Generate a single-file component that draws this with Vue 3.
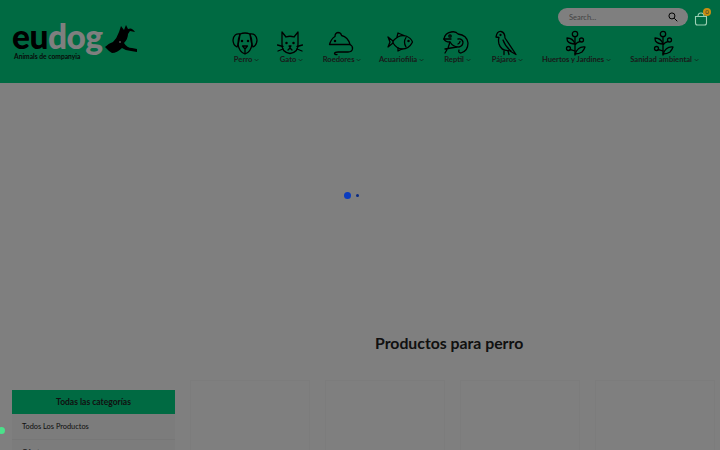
<script setup>
const navItems = [
  { label: "Perro", icon: "dog", width: 43 },
  { label: "Gato", icon: "cat", width: 47 },
  { label: "Roedores", icon: "mouse", width: 54 },
  { label: "Acuariofilia", icon: "fish", width: 65 },
  { label: "Reptil", icon: "reptile", width: 47 },
  { label: "Pájaros", icon: "bird", width: 53 },
  { label: "Huertos y Jardines", icon: "plant", width: 85 },
  { label: "Sanidad ambiental", icon: "plant", width: 91 },
];
</script>

<template>
  <div class="page">
    <header class="header">
      <div class="logo">
        <div class="logo-top">
          <span class="logo-text"><b>eu</b><span class="logo-dog">dog</span></span>
          <svg class="logo-pet" viewBox="0 0 34 32" width="34" height="32">
            <path d="M1 23 Q5 19 9 18 Q13 14 15 8 L17 2 L20 6 L22 1 L24 5 Q28 3 31 8 L26 7 L24 10 Q24 15 20 19 Q23 24 28 24 L33 25 L33 28 L27 27 Q22 27 18 24 Q13 29 8 29 L5 27 Z" fill="#000" />
            <circle cx="16" cy="18" r="0.8" fill="#fff" />
          </svg>
        </div>
        <div class="logo-sub">Animals de companyia</div>
      </div>

      <div class="header-right">
        <div class="tools">
          <div class="search">
            <span>Search...</span>
            <svg viewBox="0 0 14 14" width="10" height="10" fill="none" stroke="#000" stroke-width="1.4">
              <circle cx="5.5" cy="5.5" r="4.2" />
              <path d="M8.7 8.7 L13 13" />
            </svg>
          </div>
          <div class="cart">
            <svg viewBox="0 0 14 14" width="14" height="14" fill="none" stroke="#9ccfb4" stroke-width="1.1">
              <path d="M1.5 4.5 H12.5 V11 Q12.5 13 10.5 13 H3.5 Q1.5 13 1.5 11 Z" />
              <path d="M4 4.5 Q4 1 7 1 Q10 1 10 4.5" />
            </svg>
            <span class="badge">0</span>
          </div>
        </div>

        <nav class="nav">
          <a v-for="item in navItems" :key="item.label" class="nav-item" :style="{ width: item.width + 'px' }">
            <svg class="nav-icon" viewBox="0 0 26 26" width="26" height="26" fill="none" stroke="#000" stroke-width="1.3" stroke-linecap="round" stroke-linejoin="round">
              <g v-if="item.icon === 'dog'">
                <path d="M8 4 Q13 2 18 4 Q20 9 20 14 Q19 22 13 24 Q7 22 6 14 Q6 9 8 4 Z" />
                <path d="M8 4 Q2 3 1 10 Q1 15 5 17 Q7 13 8 4 M18 4 Q24 3 25 10 Q25 15 21 17 Q19 13 18 4" />
                <path d="M10.5 16 H15.5 L13 19 Z M13 19 V23.5" />
                <circle cx="10" cy="11" r=".6" />
                <circle cx="16" cy="11" r=".6" />
              </g>
              <g v-else-if="item.icon === 'cat'">
                <path d="M5 2 L9 7 Q13 5.5 17 7 L21 2 L21 13 Q22 22 13 23.5 Q4 22 5 13 Z" />
                <path d="M0.5 15 L6 16.5 M1 21 L6 19 M25.5 15 L20 16.5 M25 21 L20 19" />
                <path d="M12 16 H14 L13 17.5 Z M11 20 L13 18 L15 20" />
                <circle cx="9.5" cy="13" r=".6" />
                <circle cx="16.5" cy="13" r=".6" />
              </g>
              <g v-else-if="item.icon === 'mouse'">
                <path d="M1.5 14.5 Q3 9 7 6.5 Q7 3 10 2.5 Q13 2.5 13.5 5.5 Q20 7 22 14.5 Z" />
                <path d="M22 14.5 Q25 16 24.5 19 Q24 22 20 22 H10 Q7 22 6.5 23.5 Q7 25 9 24.5" />
                <circle cx="7" cy="11" r=".6" />
              </g>
              <g v-else-if="item.icon === 'fish'">
                <path d="M6 11 Q12 4 19 6 Q24 8 25.5 12 Q22 19 15 19 Q10 19 6 13 Z" />
                <path d="M6 11 L1 7 L3 12 L1 17 L6 13" />
                <path d="M10 7 L11 3 L17 5.5 M11 18 L11 21 L15 19 M19 7.5 Q16 12 19 17" />
                <circle cx="21.5" cy="11" r=".6" />
              </g>
              <g v-else-if="item.icon === 'reptile'">
                <path d="M1 9 Q2 3 8 2 Q13 1 15 4 Q24 5 25 13 Q25 21 18 23 Q15 23 16 20" />
                <path d="M1 9 Q2 12 7 12 Q10 17 16 17 Q20 16 20 12 Q19 8 15 9" />
                <path d="M15 14 Q17 13 17 11.5" />
                <path d="M1 9 H8 M7 12 L5 18 L2 23 M2 19 L14 17" />
                <circle cx="7" cy="6" r="1.2" />
              </g>
              <g v-else-if="item.icon === 'bird'">
                <path d="M3 7 Q4 1 8 1.5 Q12 2.5 12 8 L23 24.5 L16 20.5 Q8 21 6 14 Q5 10 6 7.5 Z" />
                <path d="M10 10 Q12 16 18 21 M11 21 V24.5 M15 21 L16 24.5" />
                <circle cx="7.5" cy="5" r=".5" />
              </g>
              <g v-else>
                <circle cx="13" cy="4" r="2.7" />
                <circle cx="19.5" cy="10" r="2" />
                <circle cx="6.5" cy="18.5" r="2" />
                <path d="M13 7 V25 M13 15 Q15 12 18 11.5" />
                <path d="M13 24 Q17 24 20 22 Q22 20 23 17 Q16 16 13 24 Z" />
                <path d="M13 14 Q8 14 5.5 11 Q5 9 5 8 Q11 8 13 14 Z" />
                <path d="M13 21 Q10 20 8 19.5" />
              </g>
            </svg>
            <span class="nav-label">{{ item.label }}
              <svg viewBox="0 0 8 5" width="5" height="4" fill="none" stroke="#222" stroke-width="1"><path d="M1 1 L4 4 L7 1" /></svg>
            </span>
          </a>
        </nav>
      </div>
    </header>

    <section class="hero"></section>

    <main class="content">
      <h1 class="title">Productos para perro</h1>
      <div class="columns">
        <aside class="sidebar">
          <div class="side-title">Todas las categorías</div>
          <div class="side-row">Todos Los Productos</div>
          <div class="side-row">Ofertas</div>
        </aside>
        <div class="products">
          <div class="product" v-for="n in 4" :key="n"></div>
        </div>
      </div>
    </main>

    <div class="overlay">
      <div class="spinner">
        <span class="dot-big"></span>
        <span class="dot-small"></span>
      </div>
    </div>
    <span class="whatsapp"></span>
  </div>
</template>

<style scoped>
.page {
  width: 720px;
  height: 450px;
  overflow: hidden;
  position: relative;
  background: #fff;
  font-family: "Lato", "Noto Sans", sans-serif;
}

.header {
  height: 83px;
  background: #00d584;
  display: flex;
  justify-content: space-between;
  box-sizing: border-box;
  padding: 0 10px 0 12px;
}

.logo {
  margin-top: 19px;
  width: 140px;
}

.logo-top {
  display: flex;
  align-items: flex-start;
  height: 34px;
}

.logo-text {
  font-weight: 900;
  font-size: 33.5px;
  line-height: 34px;
  letter-spacing: -0.5px;
  color: #000;
}

.logo-text b {
  font-weight: 900;
}

.logo-dog {
  color: #fff;
}

.logo-pet {
  margin: 5px 0 0 1px;
}

.logo-sub {
  font-size: 6.7px;
  font-weight: 700;
  line-height: 8px;
  margin: -1px 0 0 2px;
  color: #111;
}

.header-right {
  display: flex;
  flex-direction: column;
  align-items: flex-end;
}

.tools {
  display: flex;
  align-items: center;
  margin-top: 8px;
  gap: 6px;
  margin-right: 2px;
}

.search {
  width: 130px;
  height: 18px;
  box-sizing: border-box;
  padding: 0 10px 0 11px;
  border-radius: 9px;
  background: #fff;
  display: flex;
  align-items: center;
  justify-content: space-between;
  font-size: 7.5px;
  color: #888;
}

.cart {
  position: relative;
  z-index: 2;
  height: 16px;
  margin-top: 1px;
  display: flex;
  align-items: flex-end;
}

.badge {
  position: absolute;
  top: -2px;
  right: -3px;
  width: 8px;
  height: 8px;
  border-radius: 50%;
  background: #c98f12;
  font-size: 6px;
  line-height: 8px;
  text-align: center;
  color: #333;
}

.nav {
  display: flex;
  margin-top: 4px;
}

.nav-item {
  display: flex;
  flex-direction: column;
  align-items: center;
}

.nav-icon {
  margin-right: 3px;
}

.nav-label {
  font-size: 7.6px;
  font-weight: 700;
  line-height: 10px;
  margin-top: -2px;
  color: #333;
  white-space: nowrap;
}

.hero {
  height: 240px;
}

.title {
  margin: 10px 0 0 375px;
  font-size: 15.8px;
  line-height: 20px;
  font-weight: 700;
  color: #222;
}

.columns {
  display: flex;
  margin-top: 37px;
  padding-left: 12px;
}

.sidebar {
  width: 163px;
  background: #f8f8f8;
  font-size: 8.5px;
  color: #222;
}

.side-title {
  height: 24px;
  background: #00d584;
  font-weight: 700;
  text-align: center;
  line-height: 24px;
}

.side-row {
  height: 25px;
  line-height: 25px;
  padding-left: 10px;
  font-size: 7.4px;
  border-bottom: 1px solid #eee;
}

.products {
  display: flex;
  gap: 15px;
  margin-left: 15px;
}

.product {
  width: 118px;
  height: 100px;
  margin-top: -10px;
  border: 1px solid #f8f8f8;
  border-bottom: none;
}

.overlay {
  position: absolute;
  inset: 0;
  background: rgba(0, 0, 0, 0.5);
}

.spinner {
  position: absolute;
  left: 344px;
  top: 192px;
  display: flex;
  align-items: center;
  gap: 5px;
}

.dot-big {
  width: 7px;
  height: 7px;
  border-radius: 50%;
  background: #0a3cc0;
}

.dot-small {
  width: 3px;
  height: 3px;
  border-radius: 50%;
  background: #0a2a80;
}

.whatsapp {
  position: absolute;
  left: -2px;
  top: 427px;
  width: 7px;
  height: 7px;
  border-radius: 50%;
  background: #4be08a;
}
</style>
